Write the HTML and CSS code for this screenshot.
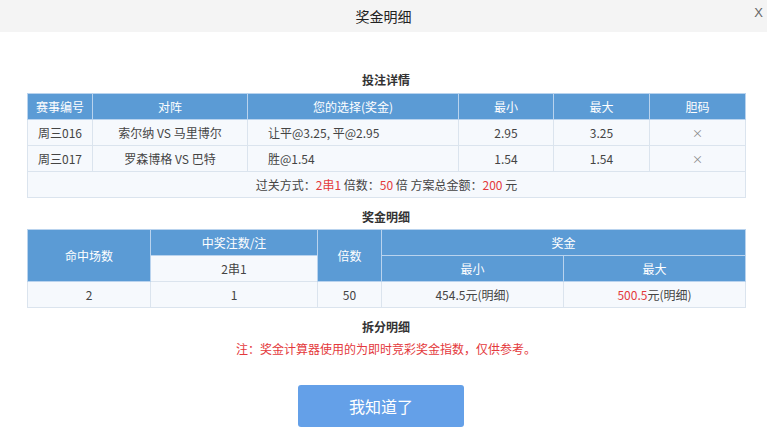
FILE: index.html
```html
<!DOCTYPE html>
<html lang="zh-CN">
<head>
<meta charset="utf-8">
<title>奖金明细</title>
<link rel="stylesheet" href="styles.css">
</head>
<body>
<div class="dialog">
  <div class="titlebar">
    <span class="title">奖金明细</span>
    <span class="close">X</span>
  </div>
  <div class="content">
    <h3 class="sec first">投注详情</h3>
    <table class="tbl t1">
      <colgroup>
        <col style="width:65px"><col style="width:155px"><col style="width:211px"><col style="width:95px"><col style="width:96px"><col style="width:96px">
      </colgroup>
      <thead>
        <tr><th>赛事编号</th><th>对阵</th><th>您的选择(奖金)</th><th>最小</th><th>最大</th><th>胆码</th></tr>
      </thead>
      <tbody>
        <tr><td>周三016</td><td>索尔纳 VS 马里博尔</td><td class="left">让平@3.25, 平@2.95</td><td>2.95</td><td>3.25</td><td class="x">×</td></tr>
        <tr><td>周三017</td><td>罗森博格 VS 巴特</td><td class="left">胜@1.54</td><td>1.54</td><td>1.54</td><td class="x">×</td></tr>
        <tr><td colspan="6">过关方式：<span class="red">2串1</span> 倍数：<span class="red">50</span> 倍 方案总金额：<span class="red">200</span> 元</td></tr>
      </tbody>
    </table>
    <h3 class="sec">奖金明细</h3>
    <table class="tbl t2">
      <colgroup>
        <col style="width:123px"><col style="width:167px"><col style="width:64px"><col style="width:182px"><col style="width:182px">
      </colgroup>
      <thead>
        <tr><th rowspan="2">命中场数</th><th>中奖注数/注</th><th rowspan="2">倍数</th><th colspan="2">奖金</th></tr>
        <tr><td class="sub">2串1</td><th>最小</th><th>最大</th></tr>
      </thead>
      <tbody>
        <tr><td>2</td><td>1</td><td>50</td><td>454.5元(明细)</td><td><span class="red">500.5</span>元(明细)</td></tr>
      </tbody>
    </table>
    <h3 class="sec">拆分明细</h3>
    <p class="note">注：奖金计算器使用的为即时竞彩奖金指数，仅供参考。</p>
    <div class="actions"><button class="btn" type="button">我知道了</button></div>
  </div>
</div>
</body>
</html>
```
FILE: styles.css
```css
html, body {
  margin: 0;
  padding: 0;
  background: #fff;
}
body {
  font-family: "Noto Sans CJK SC", "Noto Sans", sans-serif;
  font-size: 12px;
  color: #444;
  width: 767px;
  height: 447px;
  overflow: hidden;
}
.titlebar {
  height: 32px;
  background: #f4f4f4;
  position: relative;
  display: flex;
  align-items: center;
  justify-content: center;
}
.title {
  font-size: 14px;
  color: #222;
  line-height: 30px;
}
.close {
  position: absolute;
  right: 4px;
  top: 5px;
  font-family: "Liberation Sans", sans-serif;
  font-size: 13px;
  color: #666;
  line-height: 16px;
}
.content {
  padding: 38px 22px 0 27px;
}
.sec {
  margin: 9px 0 2px;
  line-height: 20px;
  height: 20px;
  font-size: 12px;
  font-weight: bold;
  color: #333;
  text-align: center;
}
.sec.first {
  margin-top: 0;
  margin-bottom: 3px;
}
.tbl {
  width: 718px;
  border-collapse: collapse;
  table-layout: fixed;
}
.tbl th, .tbl td {
  height: 25px;
  padding: 0;
  border: 1px solid #dbe4ee;
  text-align: center;
  font-size: 12px;
  line-height: 16px;
}
.tbl th {
  background: #5b9bd5;
  color: #fff;
  font-weight: normal;
  border-color: #b9d3ee;
}
.tbl td {
  background: #f6f9fd;
  color: #444;
}
.tbl td.left {
  text-align: left;
  padding-left: 20px;
}
.tbl td.x {
  color: #888;
  font-size: 11px;
}
.tbl td.sub {
  background: #f6f9fd;
  color: #444;
}
.red {
  color: #e4393c;
}
.note {
  margin: 0;
  line-height: 20px;
  color: #e4393c;
  text-align: center;
}
.actions {
  display: flex;
  justify-content: center;
  margin-top: 26px;
  padding-right: 10px;
}
.btn {
  width: 166px;
  height: 42px;
  border: none;
  border-radius: 3px;
  background: #64a0e8;
  color: #fff;
  font-family: "Noto Sans CJK SC", sans-serif;
  font-size: 16px;
  cursor: pointer;
}
```
